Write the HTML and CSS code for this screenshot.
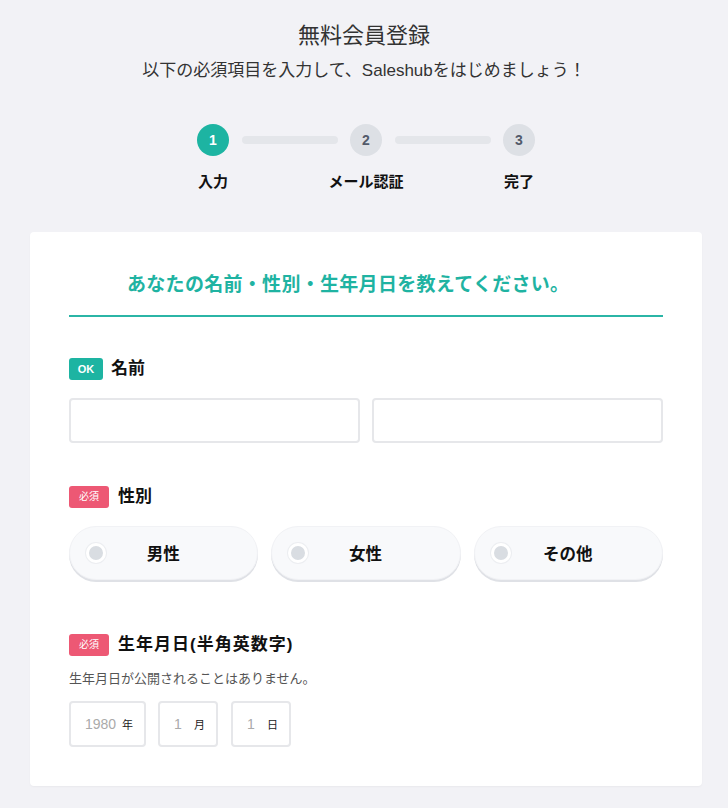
FILE: index.html
```html
<!DOCTYPE html>
<html lang="ja">
<head>
    <meta charset="UTF-8">
    <meta name="viewport" content="width=device-width, initial-scale=1.0">
    <title>無料会員登録</title>
    <link rel="stylesheet" href="styles.css">
</head>
<body>
    <header class="page-head">
        <h1>無料会員登録</h1>
        <p class="lead">以下の必須項目を入力して、Saleshubをはじめましょう！</p>
    </header>

    <ol class="steps">
        <li class="step active"><span class="num">1</span><span class="step-label">入力</span></li>
        <li class="bar"></li>
        <li class="step"><span class="num">2</span><span class="step-label">メール認証</span></li>
        <li class="bar"></li>
        <li class="step"><span class="num">3</span><span class="step-label">完了</span></li>
    </ol>

    <main class="card">
        <h2 class="card-title">あなたの名前・性別・生年月日を教えてください。</h2>

        <section class="field">
            <div class="field-label"><span class="badge ok">OK</span>名前</div>
            <div class="name-row">
                <input type="text" class="text-input">
                <input type="text" class="text-input">
            </div>
        </section>

        <section class="field gender">
            <div class="field-label"><span class="badge req">必須</span>性別</div>
            <div class="gender-row">
                <label class="pill"><span class="radio"></span><span class="pill-text">男性</span></label>
                <label class="pill"><span class="radio"></span><span class="pill-text">女性</span></label>
                <label class="pill"><span class="radio"></span><span class="pill-text">その他</span></label>
            </div>
        </section>

        <section class="field birth">
            <div class="field-label"><span class="badge req">必須</span><span class="wide">生年月日(半角英数字)</span></div>
            <p class="help">生年月日が公開されることはありません。</p>
            <div class="date-row">
                <div class="date-box year"><span class="ph">1980</span><span class="unit">年</span></div>
                <div class="date-box"><span class="ph">1</span><span class="unit">月</span></div>
                <div class="date-box day"><span class="ph">1</span><span class="unit">日</span></div>
            </div>
        </section>
    </main>
</body>
</html>
```

FILE: styles.css
```css
body {
    margin: 0;
    background-color: #f2f2f6;
    font-family: "Liberation Sans", "Noto Sans CJK JP", sans-serif;
    color: #222;
}
.page-head {
    text-align: center;
    padding-top: 20px;
}
.page-head h1 {
    margin: 0;
    font-size: 22px;
    font-weight: normal;
    line-height: 32px;
    color: #333;
}
.lead {
    margin: 6px 0 0;
    font-size: 17px;
    line-height: 26px;
    color: #333;
}
.steps {
    list-style: none;
    display: flex;
    width: 338px;
    margin: 40px 0 0 calc(50% - 167px);
    padding: 0;
    height: 96px;
}
.step {
    width: 32px;
    display: flex;
    flex-direction: column;
    align-items: center;
}
.num {
    width: 32px;
    height: 32px;
    border-radius: 50%;
    background-color: #dde0e5;
    color: #525a6a;
    font-weight: bold;
    font-size: 14px;
    line-height: 32px;
    text-align: center;
}
.step.active .num {
    background-color: #1db4a2;
    color: #fff;
}
.step-label {
    margin-top: 16px;
    white-space: nowrap;
    font-size: 15px;
    font-weight: bold;
    line-height: 20px;
    color: #111;
}
.bar {
    flex: 1;
    height: 8px;
    margin: 12px 12px 0 13px;
    border-radius: 4px;
    background-color: #e4e6ea;
}
.card {
    margin: 12px 26px 24px 30px;
    background-color: #fff;
    border-radius: 4px;
    box-shadow: 0 1px 2px rgba(0, 0, 0, 0.04);
    padding: 40px 39px 39px;
}
.card-title {
    margin: 0;
    padding: 0 0 17px 58px;
    border-bottom: 2px solid #2bb5a6;
    font-size: 19px;
    letter-spacing: 0.3px;
    line-height: 26px;
    color: #1fb3a2;
}
.field {
    margin-top: 41px;
}
.field.gender {
    margin-top: 43px;
}
.field.birth {
    margin-top: 54px;
}
.field-label {
    display: flex;
    align-items: center;
    font-size: 17px;
    font-weight: bold;
    line-height: 22px;
    color: #111;
}
.wide {
    letter-spacing: 1px;
}
.badge {
    height: 22px;
    border-radius: 3px;
    color: #fff;
    font-size: 11px;
    font-weight: bold;
    line-height: 22px;
    text-align: center;
    letter-spacing: 0;
    margin-right: 8px;
}
.badge.ok {
    width: 34px;
    background-color: #1db4a2;
}
.badge.req {
    width: 40px;
    margin-right: 9px;
    background-color: #ed5874;
    font-weight: normal;
    font-size: 10px;
}
.name-row {
    display: grid;
    grid-template-columns: 1fr 1fr;
    gap: 12px;
    margin-top: 18px;
}
.text-input {
    box-sizing: border-box;
    height: 45px;
    width: 100%;
    border: 2px solid #e6e7ea;
    border-radius: 4px;
    background: #fff;
}
.gender-row {
    display: grid;
    grid-template-columns: repeat(3, 1fr);
    gap: 13px;
    margin-top: 18px;
}
.pill {
    display: grid;
    grid-template-columns: 18px 1fr 18px;
    align-items: center;
    height: 52px;
    padding: 0 17px 0 16px;
    border-radius: 27px;
    background-color: #f8f9fb;
    border: 1px solid #f1f2f5;
    box-shadow: 0 2px 0 #dfe1e6;
}
.radio {
    box-sizing: border-box;
    width: 20px;
    height: 20px;
    border-radius: 50%;
    background-color: #d9dde2;
    border: 3px solid #fff;
    box-shadow: 0 0 0 1px #eceef1;
}
.pill-text {
    text-align: center;
    font-size: 16.5px;
    font-weight: bold;
    color: #111;
}
.help {
    margin: 13px 0 0;
    font-size: 13px;
    line-height: 20px;
    color: #555;
}
.date-row {
    display: flex;
    gap: 12px;
    margin-top: 12px;
}
.date-box {
    box-sizing: border-box;
    height: 46px;
    width: 60px;
    display: flex;
    align-items: center;
    padding-left: 14px;
    border: 2px solid #e6e7ea;
    border-radius: 4px;
}
.date-box.year {
    width: 77px;
}
.date-box.day {
    margin-left: 1px;
}
.ph {
    font-size: 14px;
    color: #aaa;
}
.unit {
    margin-left: auto;
    margin-right: 11px;
    font-size: 11px;
    color: #222;
}
```
